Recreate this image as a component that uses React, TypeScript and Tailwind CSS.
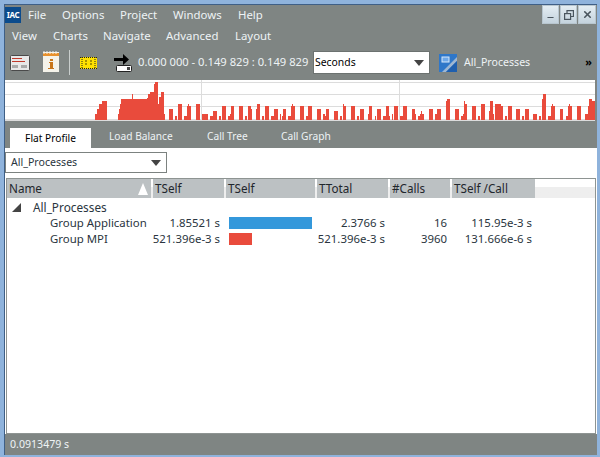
import { Minus, X } from 'lucide-react';

const font = { fontFamily: '"Noto Sans", sans-serif' };

// x, width, height of every bar in the timeline
const bars: [number, number, number][] = [
  [95, 2, 6], [97, 2, 11], [99, 3, 16], [102, 5, 19], [118, 1, 6], [119, 1, 11], [120, 1, 16], [121, 11, 21],
  [132, 1, 26], [133, 14, 21], [147, 1, 22], [148, 2, 26], [150, 4, 28], [154, 1, 36], [155, 3, 38], [158, 1, 16],
  [159, 2, 23], [161, 3, 28], [164, 1, 6], [169, 4, 11], [175, 2, 4], [178, 4, 16], [184, 3, 4], [187, 1, 14],
  [188, 1, 16], [189, 2, 14], [196, 4, 16], [202, 6, 6], [210, 3, 4], [213, 4, 9], [219, 2, 4], [222, 4, 14],
  [228, 2, 4], [230, 1, 6], [231, 3, 14], [239, 4, 14], [245, 2, 4], [248, 3, 14], [251, 1, 11], [256, 1, 11],
  [257, 3, 16], [262, 2, 4], [265, 4, 14], [271, 3, 4], [274, 4, 11], [280, 1, 6], [282, 1, 4], [283, 3, 11],
  [288, 3, 4], [291, 1, 14], [292, 1, 16], [293, 2, 14], [300, 4, 14], [306, 2, 4], [308, 4, 14], [317, 4, 11],
  [323, 2, 6], [325, 1, 4], [326, 3, 11], [334, 4, 9], [340, 2, 4], [343, 1, 16], [344, 2, 14], [351, 4, 14],
  [357, 2, 4], [360, 4, 11], [368, 1, 6], [369, 3, 14], [375, 1, 4], [377, 4, 11], [383, 3, 4], [386, 3, 14],
  [389, 1, 4], [392, 1, 6], [394, 4, 14], [400, 3, 4], [403, 4, 14], [412, 3, 11], [415, 1, 6], [418, 2, 4],
  [420, 1, 6], [421, 1, 9], [422, 2, 6], [429, 4, 11], [435, 2, 6], [437, 4, 11], [446, 1, 19], [447, 3, 21],
  [455, 4, 11], [461, 2, 4], [463, 1, 6], [464, 1, 19], [465, 2, 16], [472, 4, 14], [478, 2, 4], [481, 4, 16],
  [489, 1, 9], [490, 3, 19], [493, 1, 6], [495, 6, 16], [501, 2, 14], [505, 2, 4], [508, 4, 14], [516, 4, 11],
  [522, 2, 4], [525, 4, 11], [533, 4, 6], [539, 2, 4], [542, 1, 21], [543, 3, 26], [548, 3, 4], [551, 1, 14],
  [552, 1, 16], [553, 2, 14], [560, 3, 11], [566, 2, 4], [568, 1, 14], [569, 1, 16], [570, 2, 14], [577, 4, 14],
  [585, 3, 6], [588, 1, 14], [589, 3, 21], [592, 3, 19],
];

function Timeline() {
  return (
    <svg width="590" height="41" viewBox="5 80 590 41" className="block bg-white">
      {[82, 94, 106].map((y) => (
        <rect key={y} x="5" y={y} width="590" height="1" fill="#dcdcdc" />
      ))}
      <rect x="5" y="119" width="590" height="2" fill="#dcdcdc" />
      <rect x="201" y="80" width="1" height="40" fill="#dcdcdc" />
      <rect x="399" y="80" width="1" height="40" fill="#dcdcdc" />
      {bars.map(([x, w, h]) => (
        <rect key={x} x={x} y={120 - h} width={w} height={h} fill="#e94b3c" />
      ))}
    </svg>
  );
}

function ReportIcon() {
  return (
    <svg width="20" height="16" viewBox="0 0 20 16">
      <rect x="0.5" y="0.5" width="19" height="15" rx="1" fill="#e8e8e8" stroke="#4a4a4a" />
      <rect x="2" y="3" width="10" height="1" fill="#c0392b" />
      <rect x="2" y="6" width="13" height="1" fill="#c0392b" />
      <rect x="2" y="10" width="6" height="3" fill="#aaa" />
      <rect x="11" y="10" width="6" height="3" fill="#aaa" />
    </svg>
  );
}

function InfoIcon() {
  return (
    <svg width="16" height="21" viewBox="0 0 16 21">
      <rect x="0" y="1" width="16" height="20" fill="#f5f3ea" />
      <rect x="0" y="2" width="16" height="3" fill="#e8912d" />
      <path d="M1 0v3M4 0v3M7 0v3M10 0v3M13 0v3" stroke="#f5f3ea" strokeWidth="1" />
      <rect x="7" y="8" width="3" height="2" fill="#c8761a" />
      <path d="M6 11h4v6h1v1H5v-1h2v-5H6z" fill="#c8761a" />
    </svg>
  );
}

function RulerIcon() {
  return (
    <svg width="17" height="12" viewBox="0 0 17 12">
      <rect width="17" height="12" fill="#ffe100" />
      <path d="M0 .5h17M0 11.5h17" stroke="#222" strokeDasharray="1 1" />
      <path d="M2 0v12M15 0v12" stroke="#222" strokeDasharray="1 1" />
      <path d="M6 3v6M11 3v6" stroke="#8a7a00" strokeWidth="1.5" strokeDasharray="2 1" />
    </svg>
  );
}

function ExportIcon() {
  return (
    <svg width="18" height="18" viewBox="0 0 18 18">
      <rect x="2.500" y="11.500" width="15" height="6" rx="1" fill="#fff" stroke="#222" />
      <path d="M0 4h9V0l6 5.500-6 5.500V7H0z" fill="#000" />
      <rect x="13" y="13" width="3" height="3" fill="#444" />
    </svg>
  );
}

function ProcessIcon() {
  return (
    <svg width="18" height="18" viewBox="0 0 18 18">
      <rect width="18" height="18" fill="#2f77c9" />
      <path d="M18 3v4L7 18H3z" fill="#9db6d2" />
      <path d="M18 7v11H7z" fill="#1f5fae" />
      <rect x="3" y="3" width="7" height="5" fill="#6fa8e8" stroke="#d7e8fa" />
    </svg>
  );
}

function Caret({ className }: { className: string }) {
  return <span className={`w-0 h-0 border-x-[5px] border-x-transparent border-t-[6px] ${className}`} />;
}

function WinButton({ children, wide }: { children: React.ReactNode; wide?: boolean }) {
  return (
    <div className={`${wide ? 'w-[18px]' : 'w-[17px]'} h-[19px] flex items-center justify-center bg-gradient-to-b from-[#e4edf3] to-[#c4d3dd] border border-[#b8c6cf] text-[#4a555e]`}>
      {children}
    </div>
  );
}

const columns = [
  { label: 'Name', w: 'w-[144px]' },
  { label: 'TSelf', w: 'w-[71px]' },
  { label: 'TSelf', w: 'w-[89px]' },
  { label: 'TTotal', w: 'w-[71px]' },
  { label: '#Calls', w: 'w-[60px]' },
  { label: 'TSelf /Call', w: 'w-[83px]' },
];

const rows = [
  { name: 'Group Application', tself: '1.85521 s', bar: 'w-[83px] bg-[#3498db]', total: '2.3766 s', calls: '16', perCall: '115.95e-3 s' },
  { name: 'Group MPI', tself: '521.396e-3 s', bar: 'w-[23px] bg-[#e94b3c]', total: '521.396e-3 s', calls: '3960', perCall: '131.666e-6 s' },
];

export default function App() {
  return (
    <div style={font} className="w-[600px] h-[457px] overflow-hidden bg-[#8fb3dc] pt-[4px] pl-[4px] pr-[3px] pb-[2px] text-[11.4px]">
      <div className="h-full flex flex-col bg-[#7f8583] border-t border-l border-[#3f5f86]">
        <div className="h-[20px] flex items-start shrink-0 text-[#eef3f5]">
          <div className="w-[16px] h-[16px] mt-[2px] bg-[#0b4b8c] flex items-center justify-center text-white text-[8px] font-bold leading-none tracking-tighter">IAC</div>
          <nav className="flex ml-[7px] pt-[1px] leading-[18px]">
            <span className="w-[34px]">File</span>
            <span className="w-[58px]">Options</span>
            <span className="w-[53px]">Project</span>
            <span className="w-[65px]">Windows</span>
            <span>Help</span>
          </nav>
          <div className="ml-auto flex gap-px pr-px">
            <WinButton><Minus size={9} strokeWidth={3} className="mt-[5px]" /></WinButton>
            <WinButton>
              <svg width="10" height="10" viewBox="0 0 10 10" fill="none" stroke="currentColor" strokeWidth="1.200">
                <rect x="0.600" y="3.600" width="6" height="5.800" />
                <path d="M3 3V0.600h6.400V6.500H7" />
              </svg>
            </WinButton>
            <WinButton wide><X size={11} strokeWidth={3.500} /></WinButton>
          </div>
        </div>

        <nav className="h-[21px] shrink-0 flex items-center pl-[7px] text-[#eef3f5]">
          <span className="w-[41px]">View</span>
          <span className="w-[50px]">Charts</span>
          <span className="w-[63px]">Navigate</span>
          <span className="w-[69px]">Advanced</span>
          <span>Layout</span>
        </nav>

        <div className="h-[33px] shrink-0 flex items-center text-[#eef3f5]">
          <div className="ml-[5px]"><ReportIcon /></div>
          <div className="ml-[13px] -mt-[2px]"><InfoIcon /></div>
          <div className="ml-[10px] w-px h-[25px] bg-[#c9cecd]" />
          <div className="ml-[10px]"><RulerIcon /></div>
          <div className="ml-[17px]"><ExportIcon /></div>
          <span className="ml-[6px] w-[175px] whitespace-nowrap text-[11.2px]">0.000 000 - 0.149 829 : 0.149 829</span>
          <div className="w-[117px] h-[23px] bg-white border border-[#6c7270] flex items-center justify-between pl-[1px] pr-[5px] text-black text-[10.400px]">
            <span>Seconds</span>
            <Caret className="border-t-[#444]" />
          </div>
          <div className="ml-[9px]"><ProcessIcon /></div>
          <span className="ml-[7px] text-[10.600px]">All_Processes</span>
          <span className="ml-auto mr-[5px] text-black font-bold text-[11px]">»</span>
        </div>

        <div className="h-[1px] shrink-0" />
        <Timeline />

        <div className="h-[27px] shrink-0 flex items-end pl-[5px] text-[#eef3f5] text-[10.200px]">
          <div className="w-[81px] h-[20px] pt-[1px] bg-white text-black flex items-center justify-center">Flat Profile</div>
          <span className="ml-[18px] w-[98px] h-[19px]">Load Balance</span>
          <span className="w-[74px] h-[19px]">Call Tree</span>
          <span className="h-[19px]">Call Graph</span>
        </div>

        <div className="flex-1 min-h-0 flex flex-col bg-white">
          <div className="h-[30px] shrink-0 pt-[4px]">
            <div className="w-[162px] h-[21px] border border-[#7c8280] flex items-center justify-between pl-[5px] pr-[5px] text-[#2a3540] text-[10.600px]">
              <span>All_Processes</span>
              <Caret className="border-t-[#444]" />
            </div>
          </div>

          <div className="flex-1 min-h-0 ml-[1px] mr-px border border-[#8e9492] text-[#2a3540]">
            <div className="h-[19px] flex gap-[2px] bg-gradient-to-b from-white from-40% to-[#eeeeee] to-40%">
              {columns.map((col, i) => (
                <div key={i} className={`${col.w} bg-[#bcc1c3] pl-[2px] flex items-center justify-between text-[#1f262c] text-[11.700px]`}>
                  <span>{col.label}</span>
                  {i === 0 && <span className="mr-[3px] w-0 h-0 border-x-[5px] border-x-transparent border-b-[12px] border-b-white" />}
                </div>
              ))}
            </div>
            <div className="h-[17px] pt-[2px] flex items-center pl-[5px] text-[11.800px]">
              <span className="w-0 h-0 border-l-[9px] border-l-transparent border-b-[9px] border-b-[#444]" />
              <span className="ml-[12px]">All_Processes</span>
            </div>
            {rows.map((row) => (
              <div key={row.name} className="h-[16px] flex items-center whitespace-nowrap">
                <span className="pl-[43px] w-[144px]">{row.name}</span>
                <span className="w-[69px] text-right">{row.tself}</span>
                <span className="w-[92px] pl-[9px]"><span className={`block h-[12px] ${row.bar}`} /></span>
                <span className="w-[73px] text-right">{row.total}</span>
                <span className="w-[62px] text-right">{row.calls}</span>
                <span className="w-[85px] text-right">{row.perCall}</span>
              </div>
            ))}
          </div>
        </div>

        <div className="h-[21px] shrink-0 flex items-center pl-[5px] text-[#eef3f5] text-[10.600px]">0.0913479 s</div>
      </div>
    </div>
  );
}
